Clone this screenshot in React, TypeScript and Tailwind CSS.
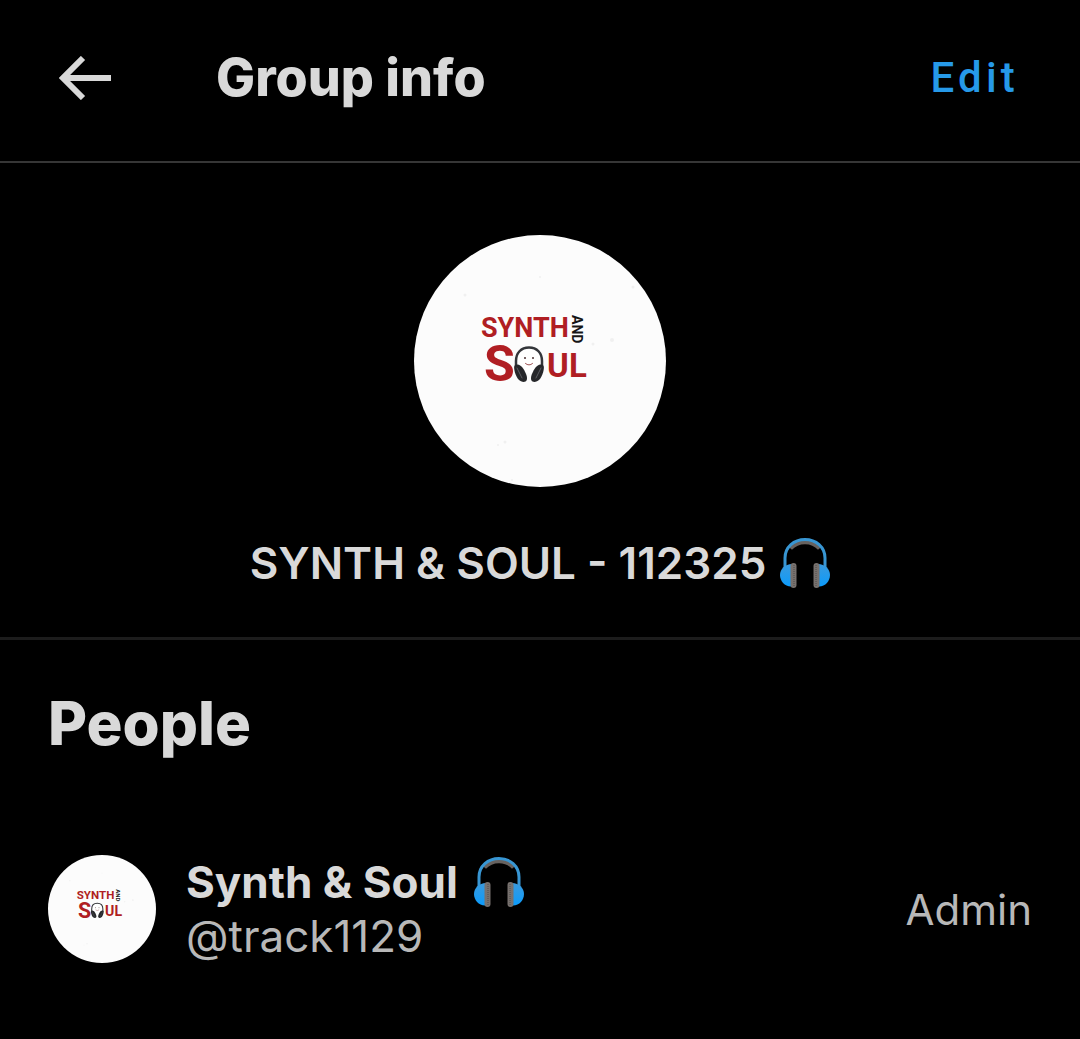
type IconProps = {
  className?: string;
};

type Member = {
  name: string;
  handle: string;
  role: string;
};

const members: Member[] = [
  { name: "Synth & Soul", handle: "@track1129", role: "Admin" },
];

function BackIcon({ className }: IconProps) {
  return (
    <svg viewBox="0 0 52 44" className={className} fill="none" aria-hidden="true">
      <path
        d="M24 2 4 22l20 20M4 22h48"
        stroke="currentColor"
        strokeWidth="6"
      />
    </svg>
  );
}

function HeadphonesEmoji({ className }: IconProps) {
  return (
    <svg viewBox="0 0 50 50" className={className} role="img" aria-label="🎧">
      <defs>
        <linearGradient id="cup" x1="0" y1="0" x2="0" y2="1">
          <stop offset="0" stopColor="#3a9add" />
          <stop offset="1" stopColor="#0c9bfb" />
        </linearGradient>
      </defs>
      <path
        d="M10.500 10.500C14.500 6 19 4.200 25 4.200s10.500 1.800 14.500 6.300"
        fill="none"
        stroke="#67625f"
        strokeWidth="4"
      />
      <path
        d="M5 31V20C5 9 14 1.500 25 1.500S45 9 45 20v11"
        fill="none"
        stroke="#3896d3"
        strokeWidth="3"
      />
      <path d="M12 26C5 26 0 31 0 37s4.500 11.500 11 11.500h1z" fill="url(#cup)" />
      <path d="M38 26c7 0 12 5 12 11s-4.500 11.500-11 11.500h-1z" fill="url(#cup)" />
      <rect x="10.500" y="25" width="6" height="25" rx="3" fill="#77716e" />
      <rect x="33.500" y="25" width="6" height="25" rx="3" fill="#77716e" />
      <path
        d="M14 27v21M36 27v21"
        stroke="#625e5c"
        strokeWidth="2"
        strokeDasharray="1 1"
      />
    </svg>
  );
}

function GroupAvatar({ className }: IconProps) {
  return (
    <svg
      viewBox="0 0 252 252"
      className={className}
      role="img"
      aria-label="Synth and Soul logo"
    >
      <circle cx="126" cy="126" r="126" fill="#fcfcfc" />
      <g fill="#f0f0f0">
        <circle cx="51" cy="60" r="1.500" />
        <circle cx="126" cy="42" r="1" />
        <circle cx="219" cy="52" r="1.500" />
        <circle cx="198" cy="105" r="2" />
        <circle cx="179" cy="109" r="1.500" />
        <circle cx="91" cy="207" r="1.500" />
        <circle cx="84" cy="210" r="1" />
        <circle cx="98" cy="245" r="1" />
      </g>
      <g fill="#b01e23" fontWeight="700" fontFamily="Roboto, sans-serif">
        <text x="67" y="102" fontSize="27">
          SYNTH
        </text>
        <text x="70" y="146" fontSize="50">
          S
        </text>
        <text x="133" y="142" fontSize="33">
          U
        </text>
        <text x="155" y="142" fontSize="33">
          L
        </text>
      </g>
      <text
        transform="translate(158 80) rotate(90)"
        fontSize="14"
        fontWeight="700"
        fontFamily="Roboto, sans-serif"
        fill="#151515"
      >
        AND
      </text>
      <circle cx="115" cy="126" r="12" fill="#fff" />
      <path
        d="M102 133v-7c0-8 5-13.500 13-13.500s13 5.500 13 13.500v7"
        fill="none"
        stroke="#34363a"
        strokeWidth="2.500"
      />
      {/* ear cups, narrow end pointing down and inwards */}
      <path
        d="M101 130c3-1.500 6 0 8.500 4s4.500 9 3 11.500-5.500 1.500-8-1-6-12-3.500-14.500z"
        fill="#26272a"
      />
      <path
        d="M129 130c-3-1.500-6 0-8.500 4s-4.500 9-3 11.500 5.500 1.500 8-1 6-12 3.500-14.500z"
        fill="#26272a"
      />
      <path
        d="m103 133 5 10M127 133l-5 10"
        stroke="#5c5e63"
        strokeWidth="1"
        strokeLinecap="round"
      />
      <circle cx="111" cy="123" r="1" fill="#4a3030" />
      <circle cx="119" cy="123" r="1" fill="#4a3030" />
      <path
        d="M111.500 128.500q3.500 3 7 0"
        fill="none"
        stroke="#9c5050"
        strokeWidth="1"
        strokeLinecap="round"
      />
    </svg>
  );
}

function MemberRow({ member }: { member: Member }) {
  return (
    <li className="flex items-center gap-[30px]">
      <GroupAvatar className="size-27 shrink-0" />
      <div className="min-w-0 grow text-[44px] leading-[54px]">
        <div className="flex items-center gap-4 font-bold">
          <span>{member.name}</span>
          <HeadphonesEmoji className="size-[50px] shrink-0" />
        </div>
        <div className="text-[#b8b8b8]">{member.handle}</div>
      </div>
      <span className="text-[42px] text-[#b8b8b8]">{member.role}</span>
    </li>
  );
}

export default function App() {
  return (
    <div className="min-h-screen bg-black font-['Inter',sans-serif] text-[#d9d9d9]">
      <header className="flex items-center border-b-2 border-[#363636] pt-12 pr-[61px] pb-[53px] pl-[59px]">
        <button type="button" aria-label="Back" className="cursor-pointer">
          <BackIcon className="h-11 w-[52px]" />
        </button>
        <h1 className="ml-[105px] grow text-[52px] leading-[60px] font-extrabold">
          Group info
        </h1>
        <button
          type="button"
          className="cursor-pointer font-['Roboto',sans-serif] text-[42px] leading-[60px] font-medium tracking-widest text-[#2699e8]"
        >
          Edit
        </button>
      </header>

      <main>
        <section className="flex flex-col items-center border-b-[3px] border-[#1c1c1c] pt-18 pb-11">
          <GroupAvatar className="size-63" />
          <h2 className="mt-[46px] flex items-center gap-3.5 text-[44px] leading-[60px] font-semibold">
            <span>SYNTH &amp; SOUL - 112325</span>
            <HeadphonesEmoji className="size-[50px] shrink-0" />
          </h2>
        </section>

        <section className="px-12 pt-[47px] pb-18">
          <h2 className="text-[60px] leading-[72px] font-extrabold">People</h2>
          <ul className="mt-24">
            {members.map((member) => (
              <MemberRow key={member.handle} member={member} />
            ))}
          </ul>
        </section>
      </main>
    </div>
  );
}
